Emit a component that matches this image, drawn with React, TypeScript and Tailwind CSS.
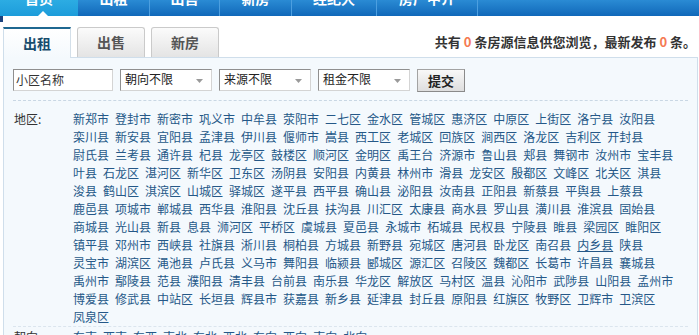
const navItems = [
  { label: "首页", w: "w-[78px]", home: true },
  { label: "出租", w: "w-[72px]" },
  { label: "出售", w: "w-[70px]" },
  { label: "新房", w: "w-[72px]" },
  { label: "经纪人", w: "w-[85px]" },
  { label: "房产中介", w: "w-[101px]" },
];

const districts =
  "新郑市 登封市 新密市 巩义市 中牟县 荥阳市 二七区 金水区 管城区 惠济区 中原区 上街区 洛宁县 汝阳县 " +
  "栾川县 新安县 宜阳县 孟津县 伊川县 偃师市 嵩县 西工区 老城区 回族区 涧西区 洛龙区 吉利区 开封县 " +
  "尉氏县 兰考县 通许县 杞县 龙亭区 鼓楼区 顺河区 金明区 禹王台 济源市 鲁山县 郏县 舞钢市 汝州市 宝丰县 " +
  "叶县 石龙区 湛河区 新华区 卫东区 汤阴县 安阳县 内黄县 林州市 滑县 龙安区 殷都区 文峰区 北关区 淇县 " +
  "浚县 鹤山区 淇滨区 山城区 驿城区 遂平县 西平县 确山县 泌阳县 汝南县 正阳县 新蔡县 平舆县 上蔡县 " +
  "鹿邑县 项城市 郸城县 西华县 淮阳县 沈丘县 扶沟县 川汇区 太康县 商水县 罗山县 潢川县 淮滨县 固始县 " +
  "商城县 光山县 新县 息县 浉河区 平桥区 虞城县 夏邑县 永城市 柘城县 民权县 宁陵县 睢县 梁园区 睢阳区 " +
  "镇平县 邓州市 西峡县 社旗县 淅川县 桐柏县 方城县 新野县 宛城区 唐河县 卧龙区 南召县 内乡县 陕县 " +
  "灵宝市 湖滨区 渑池县 卢氏县 义马市 舞阳县 临颍县 郾城区 源汇区 召陵区 魏都区 长葛市 许昌县 襄城县 " +
  "禹州市 鄢陵县 范县 濮阳县 清丰县 台前县 南乐县 华龙区 解放区 马村区 温县 沁阳市 武陟县 山阳县 孟州市 " +
  "博爱县 修武县 中站区 长垣县 辉县市 获嘉县 新乡县 延津县 封丘县 原阳县 红旗区 牧野区 卫辉市 卫滨区 " +
  "凤泉区";

const directions = ["东南", "西南", "东西", "南北", "东北", "西北", "东向", "西向", "南向", "北向"];

function Select({ label }: { label: string }) {
  return (
    <div className="flex h-[22px] w-[92px] items-center justify-between border border-[#8f8f8f] border-b-[#d4d4d4] border-r-[#d4d4d4] bg-white pl-[4px] pr-[8px] text-[12px] leading-none text-[#222]">
      <span className="-mt-[3px]">{label}</span>
      <svg width="7" height="4" viewBox="0 0 7 4" className="mt-[2px]">
        <path d="M0 0h7L3.5 4z" fill="#9a9a9a" />
      </svg>
    </div>
  );
}

export default function App() {
  return (
    <div className="h-[335px] w-[699px] overflow-hidden bg-white font-['Noto_Sans_CJK_SC',sans-serif] text-[12px] text-[#333]">
      {/* Top nav, mostly scrolled off */}
      <nav className="flex h-[16px] overflow-hidden bg-gradient-to-b from-[#2a8bd4] to-[#1068b9]">
        {navItems.map((item) => (
          <div
            key={item.label}
            className={
              item.home
                ? "relative flex w-[78px] justify-center bg-gradient-to-b from-[#2cace3] to-[#1c9cda]"
                : `flex ${item.w} justify-center border-r border-[#4c9fe0]`
            }
          >
            <span className="-mt-[9px] block text-[14px] font-bold leading-[14px] text-white">{item.label}</span>
            {item.home && (
              <span className="absolute bottom-0 left-[38px] h-0 w-0 border-x-[5px] border-b-[5px] border-x-transparent border-b-white" />
            )}
          </div>
        ))}
      </nav>

      {/* Tabs */}
      <div className="relative -mb-px flex h-[42px] items-end">
        <div className="h-[6px] w-[3px] self-start bg-[#1b427e]" />
        <div className="flex items-end gap-[6px]">
          <div className="flex h-[31px] w-[68px] items-center justify-center border-l border-r border-t-2 border-l-[#cfdeeb] border-r-[#d3dfe9] border-t-[#1f6891] bg-gradient-to-b from-white to-[#f4f9fd] text-[14px] font-bold text-[#174c6c]">
            出租
          </div>
          {["出售", "新房"].map((t) => (
            <div
              key={t}
              className="mb-px flex h-[30px] w-[68px] items-center justify-center rounded-t-[3px] border border-b-0 border-[#cacaca] bg-gradient-to-b from-[#fbfbfb] to-[#e4e4e4] text-[14px] font-bold text-[#555]"
            >
              {t}
            </div>
          ))}
        </div>
        <p className="mb-[8px] ml-auto mr-[3px] text-[13px] font-bold leading-[16px] text-[#333]">
          共有 <span className="text-[#f57a52]">0</span> 条房源信息供您浏览，最新发布{" "}
          <span className="text-[#f57a52]">0</span> 条。
        </p>
      </div>

      {/* Search panel */}
      <div className="ml-[3px] h-[300px] w-[695px] border border-[#cfdeeb] bg-[#f4f9fd] px-[9px] pt-[11px]">
        <div className="flex h-[23px] items-start gap-[7px]">
          <div className="flex h-[22px] w-[100px] items-center border border-[#8f8f8f] border-b-[#d4d4d4] border-r-[#d4d4d4] bg-white pl-[2px] text-[12px] text-[#333]">
            小区名称
          </div>
          <Select label="朝向不限" />
          <Select label="来源不限" />
          <Select label="租金不限" />
          <button className="h-[23px] w-[48px] border border-[#a3a3a3] border-b-[#8a8a8a] border-r-[#8a8a8a] bg-gradient-to-b from-[#f8f8f8] to-[#dedede] text-[13px] font-bold text-[#222]">
            提交
          </button>
        </div>

        <div className="mt-[8px] border-t border-dashed border-[#c9d7e4]" />

        <div className="mt-[9px] flex leading-[18px]">
          <div className="w-[60px] shrink-0 pl-[1px] text-[#333]">地区:</div>
          <div className="flex w-[610px] flex-wrap">
            {districts.split(" ").map((d) => (
              <a key={d} className={`mr-[6px] text-[#255888] ${d === "内乡县" ? "underline" : ""}`}>
                {d}
              </a>
            ))}
          </div>
        </div>

        <div className="border-t border-dashed border-[#dbe5ee]" />

        <div className="mt-[1px] flex leading-[18px]">
          <div className="w-[60px] shrink-0 pl-[1px] text-[#333]">朝向:</div>
          <div className="flex flex-wrap">
            {directions.map((d) => (
              <a key={d} className="mr-[6px] text-[#255888]">
                {d}
              </a>
            ))}
          </div>
        </div>
      </div>
    </div>
  );
}
